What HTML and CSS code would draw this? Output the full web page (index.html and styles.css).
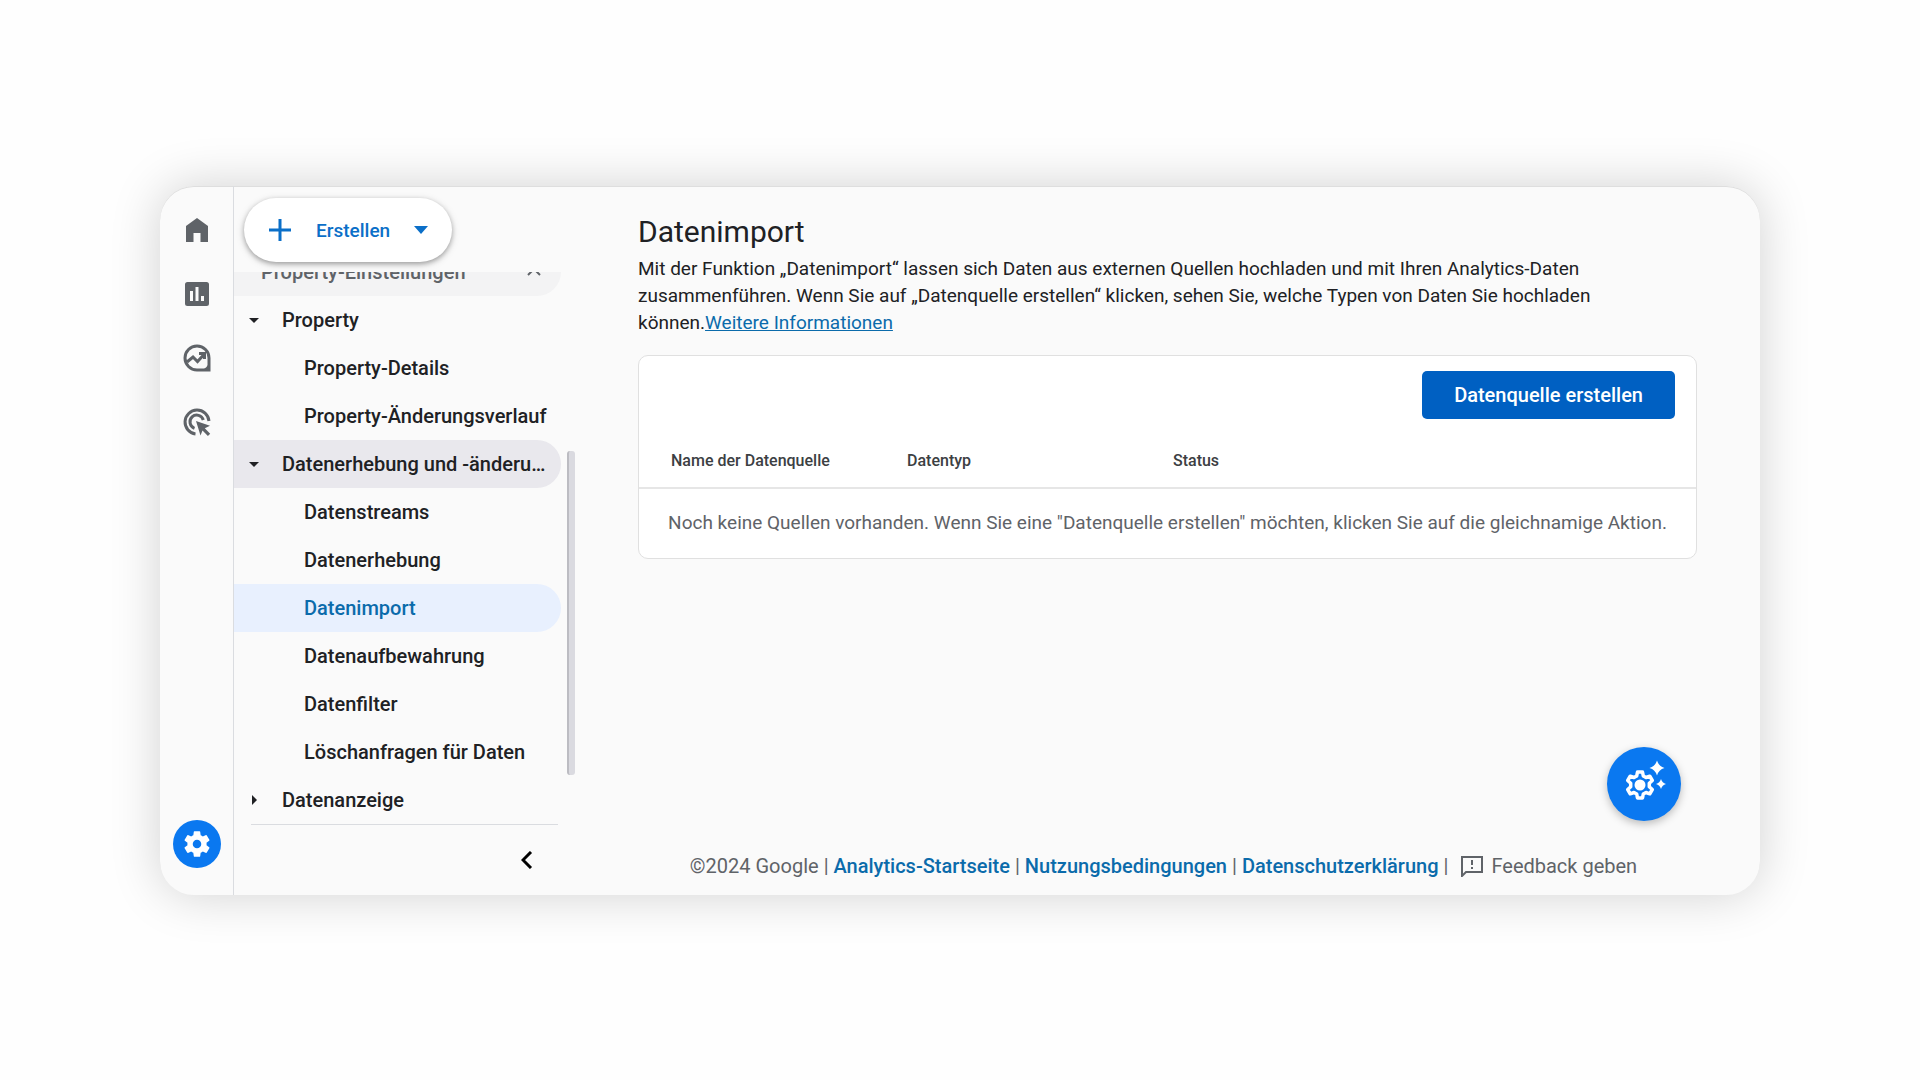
FILE: index.html
```
<!DOCTYPE html>
<html lang="de">
<head>
    <meta charset="UTF-8" />
    <meta name="viewport" content="width=device-width, initial-scale=1.0"/>
    <title>Datenimport</title>
    <link rel="stylesheet" href="styles.css">
</head>
<body>
    <div class="panel">
        <nav class="rail" aria-label="Hauptmenü">
            <a href="#" aria-label="Startseite">
                <svg width="32" height="32" viewBox="0 0 32 32"><path d="M5 12 16 4l11 8v16h-7.500v-9h-7v9H5z"/></svg>
            </a>
            <a href="#" aria-label="Berichte">
                <svg width="32" height="32" viewBox="0 0 32 32"><path fill-rule="evenodd" d="M6.500 4h19A2.500 2.500 0 0 1 28 6.500v19a2.500 2.500 0 0 1-2.500 2.500h-19A2.500 2.500 0 0 1 4 25.500v-19A2.500 2.500 0 0 1 6.500 4zM9 13v10h3V13zm5.500-4v14h3V9zm5.500 9v5h3v-5z"/></svg>
            </a>
            <a href="#" aria-label="Explorative Datenanalyse">
                <svg class="line" width="32" height="32" viewBox="0 0 32 32"><path d="M28 16A12 12 0 1 0 16 28h12z"/><path d="m6 20 6-5 4.500 4.500 6.500-7M18 11.500h5.500V17"/><path class="solid" d="M21 28q5-2 7-7v7z"/></svg>
            </a>
            <a href="#" aria-label="Werbung">
                <svg class="line" width="32" height="32" viewBox="0 0 32 32"><path d="M28 15A12 12 0 1 0 14.500 28M22.300 14A6.800 6.800 0 1 0 13.500 22.300"/><path class="solid" d="m15 15 14 4.800-5.200 2.500 5.400 5.400-2.300 2.300-5.400-5.400-2 5z"/></svg>
            </a>
            <a href="#" class="admin" aria-label="Verwaltung">
                <svg width="32" height="32" viewBox="0 0 24 24"><path d="M19.140 12.940c.04-.3.060-.61.060-.94s-.02-.64-.07-.94l2.030-1.580a.49.49 0 0 0 .12-.61l-1.920-3.320a.49.49 0 0 0-.59-.22l-2.390.96c-.5-.38-1.030-.7-1.620-.94l-.36-2.540a.48.48 0 0 0-.48-.41h-3.840a.47.47 0 0 0-.47.41l-.36 2.540c-.59.24-1.130.57-1.620.94l-2.390-.96a.48.48 0 0 0-.59.220L2.740 8.870a.47.47 0 0 0 .12.610l2.030 1.580c-.05.3-.09.63-.09.94s.02.64.07.94l-2.030 1.580a.49.49 0 0 0-.12.610l1.920 3.320c.12.220.37.290.59.220l2.390-.96c.5.380 1.030.7 1.620.94l.36 2.540c.05.240.24.410.48.410h3.840c.24 0 .44-.17.470-.41l.36-2.540c.59-.24 1.130-.56 1.620-.94l2.390.96c.22.080.47 0 .59-.22l1.920-3.320a.47.47 0 0 0-.12-.61zM12 15.200A3.200 3.200 0 1 1 12 8.800a3.200 3.200 0 0 1 0 6.400z"/></svg>
            </a>
        </nav>

        <aside class="sidebar">
            <button class="create">
                <svg width="24" height="24" viewBox="0 0 24 24"><path d="M12 1v22M1 12h22" stroke="currentColor" stroke-width="3"/></svg>
                <span>Erstellen</span>
                <svg width="14" height="8" viewBox="0 0 14 8"><path d="M0 0h14L7 8z"/></svg>
            </button>
            <div class="tree">
                <nav class="items" aria-label="Verwaltung">
                    <button class="section">Property-Einstellungen
                        <svg width="14" height="8" viewBox="0 0 14 8"><path d="m1 7 6-6 6 6" fill="none" stroke="currentColor" stroke-width="2"/></svg>
                    </button>
                    <button class="group"><i class="open"></i><span>Property</span></button>
                    <a href="#">Property-Details</a>
                    <a href="#">Property-Änderungsverlauf</a>
                    <button class="group current"><i class="open"></i><span>Datenerhebung und -änderungen</span></button>
                    <a href="#">Datenstreams</a>
                    <a href="#">Datenerhebung</a>
                    <a href="#" class="active">Datenimport</a>
                    <a href="#">Datenaufbewahrung</a>
                    <a href="#">Datenfilter</a>
                    <a href="#">Löschanfragen für Daten</a>
                    <button class="group"><i class="closed"></i><span>Datenanzeige</span></button>
                </nav>
                <div class="scrollbar"></div>
            </div>
            <div class="collapse">
                <button aria-label="Menü einklappen">
                    <svg width="12" height="18" viewBox="0 0 12 18"><path d="m10 1-8 8 8 8" fill="none" stroke="currentColor" stroke-width="3"/></svg>
                </button>
            </div>
        </aside>

        <main>
            <h1>Datenimport</h1>
            <p class="intro">Mit der Funktion „Datenimport“ lassen sich Daten aus externen Quellen hochladen und mit Ihren Analytics-Daten zusammenführen. Wenn Sie auf „Datenquelle erstellen“ klicken, sehen Sie, welche Typen von Daten Sie hochladen können.<a href="#">Weitere Informationen</a></p>

            <div class="card">
                <div class="toolbar">
                    <button class="btn">Datenquelle erstellen</button>
                </div>
                <table>
                    <thead>
                        <tr>
                            <th class="name">Name der Datenquelle</th>
                            <th class="type">Datentyp</th>
                            <th>Status</th>
                        </tr>
                    </thead>
                    <tbody>
                        <tr>
                            <td colspan="3">Noch keine Quellen vorhanden. Wenn Sie eine "Datenquelle erstellen" möchten, klicken Sie auf die gleichnamige Aktion.</td>
                        </tr>
                    </tbody>
                </table>
            </div>

            <button class="fab" aria-label="Einrichtungsassistent">
                <svg width="48" height="48" viewBox="0 0 48 48">
                    <path d="M17.500 12h5l.8 4 2.700 1.500 3.800-1.300 2.500 4.300-3 2.700v3.600l3 2.700-2.500 4.300-3.800-1.300-2.700 1.500-.8 4h-5l-.8-4-2.700-1.500-3.800 1.300-2.500-4.300 3-2.700v-3.600l-3-2.700 2.500-4.300 3.800 1.300 2.700-1.500z" fill="none" stroke="currentColor" stroke-width="3.500" stroke-linejoin="round"/>
                    <circle cx="20" cy="25" r="5.500"/>
                    <path d="M37 .500q1.700 5.800 7.500 7.500-5.800 1.700-7.500 7.500-1.700-5.800-7.500-7.500 5.800-1.700 7.500-7.500zM41 19q1.200 3.800 5 5-3.800 1.200-5 5-1.200-3.800-5-5 3.800-1.200 5-5z"/>
                </svg>
            </button>

            <footer>
                <span>©2024 Google</span> |
                <a href="#">Analytics-Startseite</a> |
                <a href="#">Nutzungsbedingungen</a> |
                <a href="#">Datenschutzerklärung</a> |
                <button class="feedback">
                    <svg width="22" height="22" viewBox="0 0 22 22"><path d="M1 21V2h20v15H5z" fill="none" stroke="currentColor" stroke-width="2"/><path d="M10 5h2v5h-2zM10 12h2v2h-2z"/></svg>
                    Feedback geben
                </button>
            </footer>
        </main>
    </div>
</body>
</html>
```
FILE: styles.css
```
        * {
            box-sizing: border-box;
        }

        body {
            margin: 0;
            min-height: 100vh;
            padding: 186px 160px 185px;
            display: flex;
            background: #fefefe;
            color: #202124;
            font-family: Roboto, "Liberation Sans", sans-serif;
            font-size: 19px;
        }

        button {
            border: none;
            background: none;
            padding: 0;
            color: inherit;
            font: inherit;
            cursor: pointer;
        }

        a {
            color: #0b6bab;
            text-decoration: none;
        }

        svg {
            display: block;
            flex: none;
            fill: currentColor;
        }

        .panel {
            flex: 1;
            display: flex;
            min-width: 0;
            background: #fafafa;
            border-radius: 34px;
            box-shadow: 0 0 50px rgba(0, 0, 0, 0.18), inset 0 1px 0 #dedede;
        }

        /* Icon rail */
        .rail {
            width: 74px;
            flex: none;
            display: flex;
            flex-direction: column;
            align-items: center;
            gap: 32px;
            padding: 28px 0 27px;
            border-right: 1px solid #dadce0;
        }

        .rail a {
            color: #5f6368;
        }

        .rail .line {
            fill: none;
            stroke: currentColor;
            stroke-width: 3;
        }

        .rail .solid {
            fill: currentColor;
            stroke: none;
        }

        .rail .admin {
            margin-top: auto;
            padding: 8px;
            border-radius: 50%;
            background: #0a78f0;
            color: #fff;
        }

        /* Sidebar */
        .sidebar {
            width: 342px;
            flex: none;
            display: flex;
            flex-direction: column;
            font-size: 20px;
            font-weight: 500;
        }

        .create {
            align-self: flex-start;
            display: flex;
            align-items: center;
            gap: 22px;
            height: 64px;
            margin: 12px 0 10px 10px;
            padding: 0 24px;
            border-radius: 32px;
            background: #fff;
            color: #0b6fc8;
            font-size: 19px;
            font-weight: 500;
            box-shadow: 0 2px 5px rgba(0, 0, 0, 0.3), 0 2px 10px rgba(0, 0, 0, 0.12);
        }

        .create span {
            margin: 0 2px;
        }

        .tree {
            display: flex;
            gap: 6px;
            padding-right: 1px;
        }

        .items {
            flex: 1;
            min-width: 0;
            height: 552px;
            display: flex;
            flex-direction: column;
            justify-content: flex-end;
            overflow: hidden;
        }

        .items a,
        .items button {
            flex: none;
            display: flex;
            align-items: center;
            height: 48px;
            padding: 0 12px 0 70px;
            border-radius: 0 24px 24px 0;
            color: #202124;
            text-align: left;
            white-space: nowrap;
        }

        .items .section {
            justify-content: space-between;
            padding: 0 20px 0 27px;
            background: #f3f3f4;
            color: #5f6368;
        }

        .items .group {
            gap: 23px;
            padding-left: 15px;
        }

        .group span {
            overflow: hidden;
            text-overflow: ellipsis;
        }

        .group i {
            flex: none;
            border: 5px solid transparent;
        }

        .group .open {
            border-top-color: #202124;
            border-bottom: none;
        }

        .group .closed {
            margin: 0 2px 0 3px;
            border-left-color: #202124;
            border-right: none;
        }

        .items .current {
            background: #e9e8ed;
        }

        .items .active {
            background: #e8f0fe;
            color: #0b6bab;
        }

        .scrollbar {
            width: 8px;
            height: 324px;
            margin-top: 179px;
            border-radius: 3px;
            background: #dadae0;
            border-left: 2px solid #bcbcc2;
        }

        .collapse {
            flex: 1;
            display: flex;
            justify-content: flex-end;
            align-items: center;
            margin: 0 18px 0 17px;
            padding: 0 25px 0 0;
            border-top: 1px solid #dadce0;
            color: #000;
        }

        /* Content */
        main {
            flex: 1;
            min-width: 0;
            display: flex;
            flex-direction: column;
            padding: 26px 63px 14px 62px;
        }

        h1 {
            margin: 0 0 3px;
            font-size: 30px;
            line-height: 40px;
            font-weight: 400;
        }

        .intro {
            max-width: 980px;
            margin: 0 0 19px;
            line-height: 27px;
        }

        .intro a {
            text-decoration: underline;
        }

        .card {
            background: #fff;
            border: 1px solid #e0e0e0;
            border-radius: 10px;
        }

        .toolbar {
            display: flex;
            justify-content: flex-end;
            padding: 15px 21px 14px;
        }

        .btn {
            height: 48px;
            padding: 0 32px;
            border-radius: 5px;
            background: #0060c2;
            color: #fff;
            font-size: 20px;
            font-weight: 500;
        }

        table {
            width: 100%;
            table-layout: fixed;
            border-collapse: collapse;
        }

        th {
            height: 55px;
            padding: 0 0 0 32px;
            border-bottom: 2px solid #e6e6e6;
            font-size: 16px;
            font-weight: 500;
            text-align: left;
            color: #3c4043;
        }

        .name {
            width: 236px;
        }

        .type {
            width: 266px;
        }

        td {
            height: 70px;
            padding: 0 0 2px;
            text-align: center;
            color: #5f6368;
        }

        .fab {
            align-self: flex-end;
            display: flex;
            align-items: center;
            justify-content: center;
            width: 74px;
            height: 74px;
            margin: auto 16px 30px 0;
            border-radius: 50%;
            background: #0a78f0;
            color: #fff;
            box-shadow: 0 3px 8px rgba(0, 0, 0, 0.25);
        }

        footer {
            display: flex;
            align-items: center;
            justify-content: center;
            gap: 5px;
            padding-right: 8px;
            font-size: 20px;
            line-height: 30px;
            color: #5f6368;
        }

        footer a {
            font-weight: 500;
        }

        .feedback {
            display: flex;
            align-items: center;
            gap: 8px;
            margin-left: 8px;
        }
```
